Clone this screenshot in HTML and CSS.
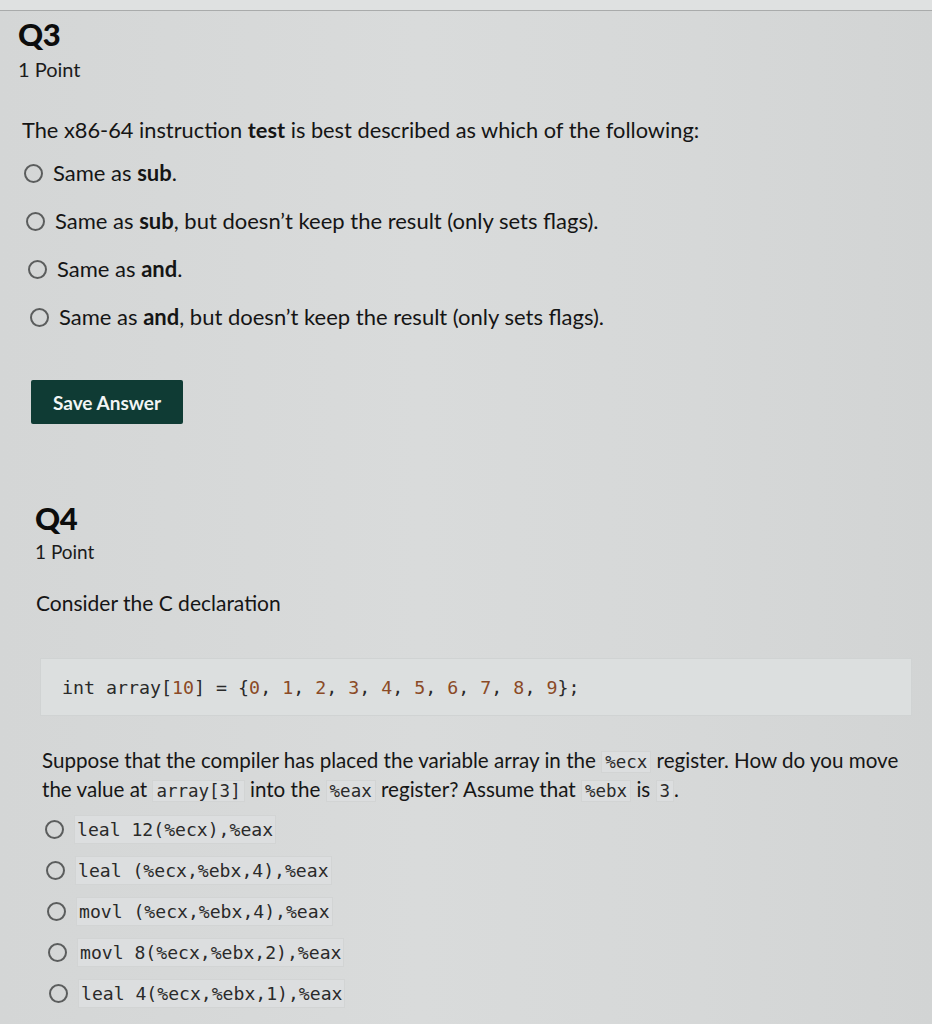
FILE: index.html
```html
<!DOCTYPE html>
<html lang="en">
<head>
<meta charset="utf-8">
<title>Quiz</title>
<link rel="stylesheet" href="styles.css">
</head>
<body>
<div class="topbar"></div>
<main class="page">
  <section class="question q3">
    <h2 class="qnum">Q3</h2>
    <div class="points">1 Point</div>
    <p class="prompt">The x86-64 instruction <b>test</b> is best described as which of the following:</p>
    <ul class="options opts3">
      <li class="opt"><span class="radio"></span><span>Same as <b>sub</b>.</span></li>
      <li class="opt"><span class="radio"></span><span>Same as <b>sub</b>, but doesn’t keep the result (only sets flags).</span></li>
      <li class="opt"><span class="radio"></span><span>Same as <b>and</b>.</span></li>
      <li class="opt"><span class="radio"></span><span>Same as <b>and</b>, but doesn’t keep the result (only sets flags).</span></li>
    </ul>
    <button class="save">Save Answer</button>
  </section>

  <section class="question q4">
    <h2 class="qnum">Q4</h2>
    <div class="points">1 Point</div>
    <p class="prompt small">Consider the C declaration</p>
    <pre class="codeblock"><code>int array[<span class="num">10</span>] = {<span class="num">0</span>, <span class="num">1</span>, <span class="num">2</span>, <span class="num">3</span>, <span class="num">4</span>, <span class="num">5</span>, <span class="num">6</span>, <span class="num">7</span>, <span class="num">8</span>, <span class="num">9</span>};</code></pre>
    <p class="para"><span class="line">Suppose that the compiler has placed the variable array in the <code class="ic">%ecx</code> register. How do you move</span><span class="line">the value at <code class="ic">array[3]</code> into the <code class="ic">%eax</code> register? Assume that <code class="ic">%ebx</code> is <code class="ic">3</code>.</span></p>
    <ul class="options opts4">
      <li class="opt"><span class="radio"></span><code class="ic big">leal 12(%ecx),%eax</code></li>
      <li class="opt"><span class="radio"></span><code class="ic big">leal (%ecx,%ebx,4),%eax</code></li>
      <li class="opt"><span class="radio"></span><code class="ic big">movl (%ecx,%ebx,4),%eax</code></li>
      <li class="opt"><span class="radio"></span><code class="ic big">movl 8(%ecx,%ebx,2),%eax</code></li>
      <li class="opt"><span class="radio"></span><code class="ic big">leal 4(%ecx,%ebx,1),%eax</code></li>
    </ul>
  </section>
</main>
</body>
</html>
```
FILE: styles.css
```css
* { box-sizing: border-box; }
html, body {
  margin: 0;
  padding: 0;
}
body {
  width: 932px;
  height: 1024px;
  overflow: hidden;
  background: linear-gradient(90deg, #d4d6d6 0%, #d9dbdb 45%, #d6d8d8 75%, #d2d4d4 100%);
  font-family: Lato, "Open Sans", Arial, sans-serif;
  color: #151515;
}
.topbar {
  height: 11px;
  background: #dfe1e1;
  border-bottom: 1px solid #a9abab;
}
.page {
  display: flex;
  flex-direction: column;
}
.question { display: flex; flex-direction: column; align-items: flex-start; }
.q3 { padding: 5px 0 0 18px; }
.q4 { padding: 76px 0 0 35px; }

.qnum {
  margin: 0;
  font-size: 31px;
  font-weight: 900;
  line-height: 36px;
  letter-spacing: -0.3px;
  color: #0c0c0c;
}
.points {
  font-size: 20px;
  line-height: 24px;
  margin-top: 5px;
  color: #1b1b1b;
}
.q4 .points { font-size: 19px; margin-top: 4px; }
.prompt {
  margin: 35px 0 0 4px;
  font-size: 21.8px;
  line-height: 28px;
}
.prompt b { font-weight: 700; }
.prompt.small { font-size: 21px; margin: 26px 0 0 1px; line-height: 26px; }

.options {
  list-style: none;
  margin: 0;
  padding: 0;
  display: flex;
  flex-direction: column;
}
.opt {
  display: flex;
  align-items: center;
}
.radio {
  width: 19px;
  height: 19px;
  border: 2.5px solid #5b5d5d;
  border-radius: 50%;
  flex: none;
}
.opts3 { margin: 17px 0 0 6px; gap: 24px; }
.opts3 .opt { font-size: 22px; line-height: 24px; gap: 10px; }
.opts3 .opt:nth-child(2) { margin-left: 2px; }
.opts3 .opt:nth-child(3) { margin-left: 4px; }
.opts3 .opt:nth-child(4) { margin-left: 6px; }
.opts3 b { font-weight: 700; }

.save {
  margin: 51px 0 0 13px;
  width: 152px;
  height: 44px;
  background: #0f3b34;
  color: #f2f5f4;
  border: none;
  border-radius: 2px;
  font-family: inherit;
  font-size: 19px;
  font-weight: 700;
  padding: 0;
}

.codeblock {
  margin: 42px 0 0 5px;
  width: 872px;
  height: 58px;
  background: #dcdfdf;
  border: 1px solid #d0d3d3;
  display: flex;
  align-items: center;
  padding: 0 0 0 21px;
  font-family: "DejaVu Sans Mono", "Liberation Mono", monospace;
  font-size: 18.3px;
  color: #2a2a2a;
}
.num { color: #8b4a26; }

.para {
  margin: 31px 0 0 7px;
  font-size: 20.6px;
  line-height: 27px;
  width: 872px;
  color: #161616;
  display: flex;
  flex-direction: column;
}
.line { display: block; white-space: nowrap; }
.ic {
  font-family: "DejaVu Sans Mono", "Liberation Mono", monospace;
  font-size: 17.5px;
  background: #dcdedf;
  border: 1px solid #d2d4d4;
  padding: 0 3px;
  color: #2a2a2a;
}
.opts4 { margin: 10px 0 0 10px; gap: 12px; }
.opts4 .opt { gap: 10px; }
.opts4 .opt:nth-child(2) { margin-left: 1px; }
.opts4 .opt:nth-child(3) { margin-left: 2px; }
.opts4 .opt:nth-child(4) { margin-left: 3px; }
.opts4 .opt:nth-child(5) { margin-left: 4px; }
.ic.big {
  font-size: 18.1px;
  padding: 2px 2px;
  line-height: 23px;
}
```
